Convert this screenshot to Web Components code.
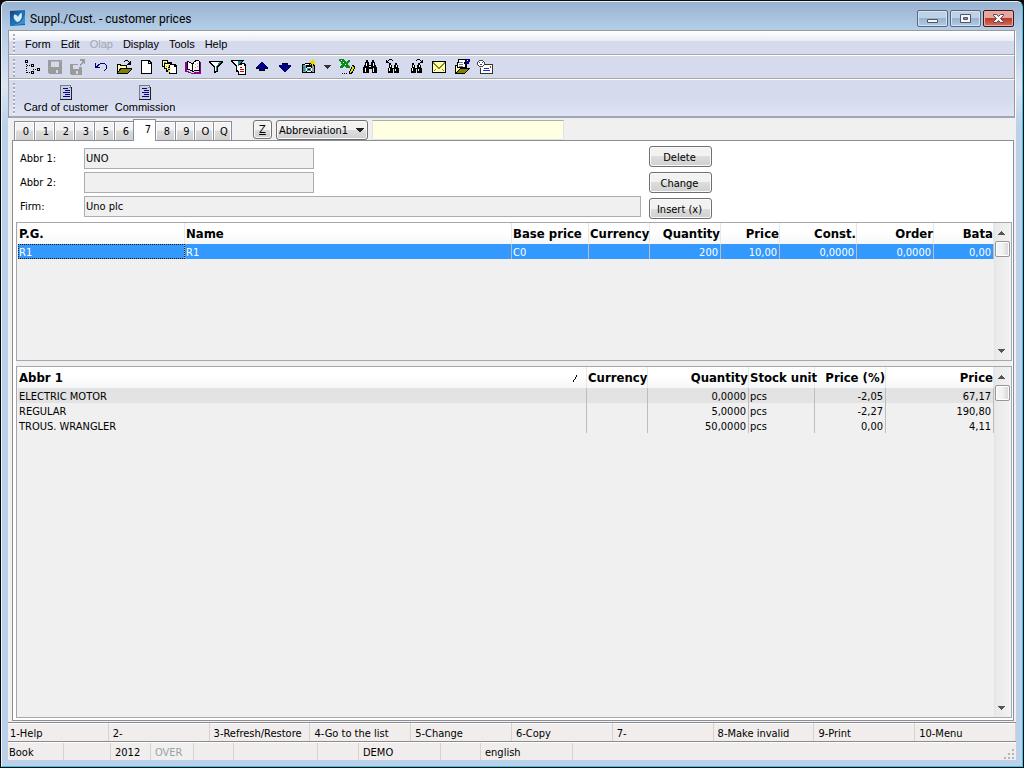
<!DOCTYPE html>
<html lang="en">
<head>
<meta charset="utf-8">
<title>Suppl./Cust. - customer prices</title>
<style>
html,body{margin:0;height:100%;background:#0b0b0d}
body{font:11px/15px "DejaVu Sans Condensed","DejaVu Sans",sans-serif;color:#000}
</style>
</head>
<body>
<app-window heading="Suppl./Cust. - customer prices">
  <tool-area slot="tools"></tool-area>
  <tab-strip slot="tabs"></tab-strip>
  <customer-form slot="form"></customer-form>
  <data-grid slot="upper" source="prices"></data-grid>
  <data-grid slot="lower" source="items"></data-grid>
  <function-bar slot="keys"></function-bar>
  <status-bar slot="status"></status-bar>
</app-window>

<script>
const RESET = `*,:host{box-sizing:border-box}
button,input,select{font:inherit;color:inherit;margin:0;border-radius:0}
button{padding:0;border:0;background:none}
svg{display:block;flex:none}`;

function define(name, css, html) {
  customElements.define(name, class extends HTMLElement {
    connectedCallback() {
      if (this.shadowRoot) return;
      const root = this.attachShadow({ mode: 'open' });
      root.innerHTML = `<style>${RESET}${css}</style>${typeof html === 'function' ? html(this) : html}`;
    }
  });
}

/* ---------- icons, each on a 16 x 16 pixel grid ---------- */
const binocular = `<path fill="#000" d="M4 4h2v2h1v2h2V6h1V4h2v2h1v3h1v5h-5v-4H8v4H3V9h1V6z"/><path fill="#fff" d="M5 6h1v2H5zM4 9h1v3H4zM11 6h1v2h-1zM10 10h1v2h-1zM7 8h2v1H7z"/>`;
const funnel = `<path fill="#000" d="M1 2h14v2h-1v1h-1v1h-1v1h-1v1h-1v5H8v1H6V8H5V7H4V6H3V5H2V4H1z"/><path fill="#fff" d="M3 3h9v1h-1v1h-1v1H9v2H8v4H7V7H6V6H5V5H4V4H3z"/><path fill="#1b8f8f" d="M11 3h2v1h-1v1h-1v1h-1v1H9v5H8V7h1V6h1V4h1z"/>`;
const ICONS = {
  tree: `<g fill="none" stroke="#000"><path d="M1.5 1.5h2v2h-2zM7.5 5.5h2v2h-2zM7.5 12.5h2v2h-2zM13.500 9.500h2v2h-2z"/><path stroke-dasharray="1 1" d="M2.500 5v9M3 6.500h4M3 13.500h4M9 10.500h4"/></g>`,
  save: `<path fill="#9b9b9b" d="M1 1h14v14H2l-1-1z"/><path fill="#d5daed" d="M4 2h8v6H4zM9 11h2v3H9z"/><path fill="#b5b7c2" d="M4 2h8v1H4zM13 2h1v1h-1z"/>`,
  saveas: `<path fill="#9b9b9b" d="M0 5h8v3h4v8H1l-1-1z"/><path fill="#d5daed" d="M3 6h6v4H3zM6 12h2v3H6z"/><path fill="#9b9b9b" d="M10 0h5v5h-1V4h-1v1h-1v1h-1v1h-1V5h1V4h1V2h-2z"/>`,
  undo: `<path fill="#000080" d="M2 4h1v3h1V6h1V5h2V4h5v1h1v1h1v4h-1v1h-1v1h-1v-1h1v-1h1V6h-1V5H7v1H6v1H5v1h2v1H2z"/>`,
  open: `<path fill="#000" d="M1 5h4v1h6v3h5v1l-4 5H1z"/><path fill="#ffffa0" d="M2 6h2v1h6v2H4l-2 4z"/><path fill="#7f7f00" d="M5 10h10l-4 4H2z"/><path fill="#000" d="M8 2h1V1h3v1h1v1h1V2h1v4h-4V5h1V4h1V3h-1V2H9v1H8z"/>`,
  page: `<path fill="#000" d="M2 1h8l3 3v11H2z"/><path fill="#fff" d="M3 2h6v3h3v9H3zM10 3h1v1h-1z"/>`,
  copies: `<path fill="#000" d="M0 1h6v2h4v2h3l2 2v8H7v-2H4v-3H2V8H0z"/><path fill="#ffff9a" d="M1 2h4v2H2v3H1zM3 5h5v1H6v5H5V9H3z"/><path fill="#a09a20" d="M2 3h2v1H2zM4 7h1v1H4z"/><path fill="#fff" d="M8 6h4v2h2v6H8z"/><path fill="#e5d92b" d="M6 6h1v2H6zM6 9h2v1H6zM6 11h2v2H6z"/><path fill="#000" d="M7 6h1v1H7zM7 8h1v1H7z"/>`,
  book: `<path fill="#900090" d="M0 3h2v9h2v1h2v1h3v-1h5V3h2v12H6v-1H3v-1H0z"/><path fill="#000" d="M2 2h2v1h2v1h2V3h1V2h1V1h4v1h1v10H9v1H7v-1H5v-1H2z"/><path fill="#fff" d="M3 3h1v1h2v1h1v6H5v-1H3zM8 5h1V3h2V2h3v9H9v1H8z"/><path fill="#aaa" d="M10 5h1v1h-1zM12 4h1v1h-1zM10 8h1v1h-1zM12 7h1v1h-1z"/>`,
  filter: funnel,
  filterdoc: `<path fill="#000" d="M0 1h13v1h-1v1h-1v1h3v1h1v11H7v-3H5V7H4V6H3V5H2V4H1V3H0z"/><path fill="#fff" d="M2 2h5v2h1v8H7v-1H6V6H5V5H4V4H3V3H2zM8 6h3V5h2v2h1v8H8z"/><path fill="#1b8f8f" d="M7 2h4v1h-1v1H9v1H8v2H7z"/><path fill="#d00000" d="M9 8h2v1H9zM9 10h4v1H9zM9 12h4v1H9z"/>`,
  up: `<path fill="#000080" d="M7 3h2v1h1v1h1v1h1v1h1v1h1v2h-3v2H5v-2H2V8h1V7h1V6h1V5h1V4h1z"/><path fill="#000" d="M2 9h3v1H2zM11 9h3v1h-3zM5 11h6v1H5z"/>`,
  down: `<path fill="#000080" d="M5 4h6v2h3v2h-1v1h-1v1h-1v1h-1v1H9v1H7v-1H6v-1H5v-1H4V9H3V8H2V6h3z"/><path fill="#000" d="M5 4h6v1H5z"/>`,
  camera: `<path fill="#000" d="M2 5h3V4h6v1h4v9H2z"/><path fill="#9c9c9c" d="M3 6h3v7H3zM12 7h2v6h-2z"/><path fill="#fff" d="M5 5h4v1H5zM7 8h4v1h1v3h-1v1H7v-1H6V9h1z"/><path fill="#1a9c9c" d="M3 7h2v5H3zM7 9h4v3H7z"/><path fill="#000" d="M8 10h2v1H8z"/><path fill="#e6d800" d="M12 0h1v2h1V1h1v1h-1v1h2v1h-2v1h1v1h-1V5h-1v2h-1V5h-1v1h-1V5h1V4H9V3h2V2h-1V1h1v1h1z"/>`,
  caret: `<path fill="#222" d="M4 6h8v1h-1v1h-1v1H9v1H7V9H6V8H5V7H4z"/>`,
  toolcaret: `<path fill="#333" d="M5 6h7v1h-1v1h-1v1H9v1H8V9H7V8H6V7H5z"/>`,
  excel: `<path fill="#0a8a1c" d="M0 0h5v1h1v1h1v1h1V2h1V1h2v2h-1v1H9v2h1v1h1v2H7V8H6V7H5v1H4v1H1V7h1V6h1V5H2V3H1V2H0z"/><path fill="#fff" d="M2 1h1v1H2zM4 3h1v1H4zM6 5h1v1H6z"/><path fill="#000" d="M13 6h2v1h1v3h-1v2h-1v2h-1v1h-3v-3h1v-2h1V8h1z"/><path fill="#f0e000" d="M13 7h1v1h1v2h-1v2h-1v1h-1v1h-1v-2h1v-2h1z"/><path fill="#000" d="M3 14h1v1H3zM5 14h1v1H5zM7 14h1v1H7z"/>`,
  find: `<path fill="#000" d="M4 1h2v2h1v3h2V3h1V1h2v2h1v3h1v2h1v6h-5v-4H7v4H1V8h1V6h1V3h1z"/><path fill="#fff" d="M4 4h1v3H4zM3 9h1v4H3zM11 4h1v3h-1zM11 9h1v4h-1zM7 7h2v1H7z"/>`,
  findprev: `${binocular}<path fill="#000" d="M1 1h1v2h2v1H1zM3 1h1V0h3v1h1v1H7V1H4v1H3v1H2V2h1z"/>`,
  findnext: `${binocular}<path fill="#000" d="M15 1h-1v2h-2v1h3zM13 1h-1V0H9v1H8v1h1V1h3v1h1v1h1V2h-1z"/>`,
  mail: `<path fill="#000" d="M1 2h14v12H1z"/><path fill="#ffffb0" d="M2 3h12v10H2z"/><path fill="#8b8520" d="M2 3h1v1h1v1h1v1h1v1h1v1h2V7h1V6h1V5h1V4h1V3h1v2h-1v1h-1v1h-1v1h-1v1H9v1H7V9H6V8H5V7H4V6H3V5H2zM3 11h1v1H3zM4 10h1v1H4zM12 11h1v1h-1zM11 10h1v1h-1z"/>`,
  note: `<path fill="#000" d="M4 0h9v9h3l-5 6H1V6h2V3h1z"/><path fill="#fff" d="M5 1h6v2h-1v2h1v3H4V4h1z"/><path fill="#777" d="M5 3h4v1H5zM5 5h4v1H5zM5 7h4v1H5z"/><path fill="#ffffa0" d="M2 7h1v2h3l-4 4z"/><path fill="#7f7f00" d="M6 10h8l-4 4H2z"/><path fill="#000080" d="M12 0h4v3h-1v2h-3v1h-1V4h1z"/><path fill="#fff" d="M13 1h1v1h-1z"/>`,
  card: `<path fill="#333" d="M5 5h11v10H3V9h2z"/><path fill="#fff" d="M4 6h11v8H4z"/><path fill="#444" d="M2 1h4v1h1v1h1v3H7v1H6v1H2V7H1V6H0V3h1V2h1z"/><path fill="#fff" d="M2 2h4v1h1v3H6v1H2V6H1V3h1z"/><path fill="#444" d="M2 3h1v1H2zM5 3h1v1H5zM3 5h2v1H3z"/><path fill="#2030c0" d="M7 9h5v1H7zM6 11h7v1H6z"/><path fill="#d02020" d="M13 7h1v2h-1z"/>`,
  list: `<path fill="#777b88" d="M2 0h11v2h1v13H2z"/><path fill="#c9cee0" d="M3 1h8v2h2v11H3z"/><path fill="#fff" d="M11 1h1v1h-1z"/><path fill="#00008b" d="M5 3h5v1H5zM7 5h5v1H7zM5 7h7v1H5zM7 9h5v1H7zM5 11h7v1H5z"/><path fill="#222" d="M13 2h1v13H2v-1h11z"/>`,
  arrowup: `<path fill="#555" d="M6 7h1v1h1v1h1v1h1v1H3v-1h1V9h1V8h1z"/>`,
  arrowdown: `<path fill="#555" d="M3 6h7v1H9v1H8v1H7v1H6V9H5V8H4V7H3z"/>`
};

define('pixel-icon', `:host{display:block;width:16px;height:16px;flex:none}`,
  el => `<svg width="16" height="16" viewBox="0 0 16 16" shape-rendering="crispEdges" aria-hidden="true">${ICONS[el.getAttribute('name')]}</svg>`);

/* ---------- window frame ---------- */
define('app-window', `
:host{display:block;height:100vh;padding:1px}
.frame{height:100%;display:flex;flex-direction:column;padding:0 6px 6px;border:1px solid #e9f3fb;border-right-color:#2fc8e8;border-bottom-color:#2fc8e8;border-radius:6px 6px 0 0;
 background:linear-gradient(#98b2d1 0,#b5cce6 28px,#dbe6f3 84px,#b9d1ea 124px)}
header{display:flex;align-items:flex-start;height:28px;flex:none;gap:4px;margin:0 -6px;padding:8px 8px 0;border-radius:6px 6px 0 0;background:linear-gradient(#98b2d1,#b5cee8)}
h1{margin:0;flex:1;font:12px/18px Roboto,"Open Sans",sans-serif}
.controls{display:flex;gap:2px}
.controls button{width:31px;height:17px;display:grid;place-items:center;border:1px solid #56687f;border-radius:2px;box-shadow:inset 0 0 0 1px #d4e2f1;background:linear-gradient(#bdd1e7 50%,#97b3d0 50%,#b5cde5)}
.controls .close{border-color:#481018;box-shadow:inset 0 0 0 1px #e5b0a8;background:linear-gradient(#e4a79e 50%,#ba3a24 50%,#d4725c)}
.content{flex:1;min-height:0;display:flex;flex-direction:column;background:#f0f0f0}
main{flex:1;min-height:0;margin:0 2px 1px 4px;display:flex;flex-direction:column;border:1px solid #8b8e99;border-top:0;background:#fff}
.grids{flex:1;min-height:0;display:flex;flex-direction:column;gap:5px;margin:0 1px 2px 3px;background:#f0f0f0}
::slotted([slot=upper]){height:139px;flex:none}
::slotted([slot=lower]){flex:1;min-height:0}
`, el => `<div class="frame">
<header>
 <svg width="16" height="17" viewBox="0 0 16 17" aria-hidden="true"><defs><linearGradient id="g" x2="1" y2="1"><stop stop-color="#173a72"/><stop offset=".5" stop-color="#1d76b8"/><stop offset="1" stop-color="#0c559b"/></linearGradient></defs><path fill="url(#g)" d="M0 1l15-1v15l-14 1H0z"/><path fill="#58aede" d="M5 14c5 0 8-4 10-10v10l-10 1z" opacity=".6"/><path fill="#d3ecf8" d="M7 12C4 10 3 7 4 5c1-1 3 0 4 2 1-2 2-4 4-4-1 1 1 3-1 6-1 2-2 3-4 3z"/></svg>
 <h1>${el.getAttribute('heading')}</h1>
 <div class="controls">
  <button aria-label="Minimize"><svg width="13" height="11" viewBox="0 0 13 11"><path d="M1.5 6.5h10v3h-10z" fill="#f7f7f7" stroke="#4c5668"/></svg></button>
  <button aria-label="Maximize"><svg width="13" height="11" viewBox="0 0 13 11"><path d="M1.5 1.5h10v8h-10z" fill="#f7f7f7" stroke="#4c5668"/><path d="M4.5 4.5h4v2h-4z" fill="#7d9fc5" stroke="#4c5668"/></svg></button>
  <button class="close" aria-label="Close"><svg width="13" height="11" viewBox="0 0 13 11"><path d="M1.5 1.5h3l2 2 2-2h3v1l-3 3 3 3v1h-3l-2-2-2 2h-3v-1l3-3-3-3z" fill="#f7f7f7" stroke="#4c4658"/></svg></button>
 </div>
</header>
<div class="content">
 <slot name="tools"></slot><slot name="tabs"></slot>
 <main><slot name="form"></slot><div class="grids"><slot name="upper"></slot><slot name="lower"></slot></div></main>
 <slot name="keys"></slot><slot name="status"></slot>
</div></div>`);

/* ---------- menu, toolbar, shortcuts ---------- */
const MENU = ['Form', 'Edit', 'Olap', 'Display', 'Tools', 'Help'];
const TOOLS = ['tree', 'save', 'saveas', 'undo', 'open', 'page', 'copies', 'book', 'filter', 'filterdoc', 'up', 'down', 'camera', 'toolcaret', 'excel', 'find', 'findprev', 'findnext', 'mail', 'note', 'card'];
define('tool-area', `
:host{display:block;flex:none;font:11px/15px "Liberation Sans",Arial,sans-serif;background:#d5daed;border:1px solid #98989c;border-bottom:0;border-right:1px solid #fff}
.row{display:flex;align-items:center;padding-left:11px;border-right:1px solid #98989c;position:relative}
.row::before{content:"";position:absolute;left:4px;top:3px;bottom:2px;width:2px;background:repeating-linear-gradient(#a9adba 0 2px,#fff 2px 3px,transparent 3px 4px)}
nav{height:25px;border-bottom:1px solid #fff;box-shadow:inset 0 -1px #a6a6a6;background:linear-gradient(#fff,#e9ecf6 10px,#d5daed 10px)}
nav button{padding:3px 5px 0}
nav button:disabled{color:#a3a6b0}
.bar{height:24px;border-bottom:1px solid #fff;box-shadow:inset 0 -1px #a6a6a6;align-items:flex-start}
.bar button{width:23px;height:22px;display:grid;place-items:center}
.bar .toolcaret{width:16px}
.short{height:38px;border-bottom:2px solid #a2a6b4;background:linear-gradient(#d5daed 55%,#dfe5f6)}
.short button{display:flex;flex-direction:column;align-items:center;padding-top:3px;width:92px;line-height:13px}
.short button+button{width:66px}
`, `
<nav class="row" aria-label="Menu">${MENU.map(m => `<button${m === 'Olap' ? ' disabled' : ''}>${m}</button>`).join('')}</nav>
<div class="row bar" role="toolbar">${TOOLS.map(t => `<button class="${t}" aria-label="${t}"><pixel-icon name="${t}"></pixel-icon></button>`).join('')}</div>
<div class="row short"><button><pixel-icon name="list"></pixel-icon>Card of customer</button><button><pixel-icon name="list"></pixel-icon>Commission</button></div>`);

/* ---------- tabs with the search box ---------- */
define('tab-strip', `
:host{display:flex;flex:none;align-items:flex-end;height:23px;margin:0 2px 0 4px;padding-left:2px;border-bottom:1px solid #8b8e99;background:#f0f0f0}
[role=tablist]{display:flex;align-items:flex-end}
[role=tab]{width:20px;height:19px;padding-left:3px;border:1px solid #8b8e99;border-bottom:0;border-right-width:0;box-shadow:inset 1px 1px #fff,inset -1px 0 #fff;background:linear-gradient(#f3f3f3 45%,#dcdcdc 50%,#d0d0d0)}
[role=tab]:last-child{border-right-width:1px}
[aria-selected=true]{width:23px;height:22px;margin:0 0 -1px -1px;padding:0 0 3px 7px;border-right-width:1px;background:#fff;box-shadow:none}
[aria-selected=true]+[role=tab]{border-left:0}
[aria-selected=true]~[role=tab]{width:19px}
.search{display:flex;gap:4px;margin-left:21px}
.search button{width:19px;height:19px;border:1px solid #707070;border-radius:3px;box-shadow:inset 0 0 0 1px #fafafa;background:linear-gradient(#f2f2f2 50%,#ddd 50%,#d0d0d0);text-decoration:underline}
.pick{position:relative;display:block}
select{appearance:none;display:block;width:92px;height:20px;padding:0 0 0 2px;border:1px solid #707070;border-radius:3px;box-shadow:inset 0 0 0 1px #fafafa;background:linear-gradient(#f2f2f2 50%,#ddd 50%,#d0d0d0)}
.pick pixel-icon{position:absolute;right:0;top:2px;pointer-events:none}
input{width:192px;height:20px;padding:0 2px;background:#ffffe1;border:1px solid #e2e3ea;border-top-color:#abadb3}
`, `
<div role="tablist">${['0', '1', '2', '3', '5', '6', '7', '8', '9', 'O', 'Q'].map(t => `<button role="tab" aria-selected="${t === '7'}">${t}</button>`).join('')}</div>
<div class="search"><button>Z</button>
<label class="pick"><select aria-label="Search by"><option>Abbreviation1</option></select><pixel-icon name="caret"></pixel-icon></label>
<input type="text" aria-label="Search text"></div>`);

/* ---------- customer form ---------- */
define('customer-form', `
:host{display:flex;flex:none;height:81px;gap:8px;padding:5px 6px 0 7px}
.fields{display:grid;grid-template-columns:64px 557px;grid-auto-rows:21px;row-gap:3px;padding-top:2px;align-items:center}
label{padding-bottom:1px}
input{width:230px;height:21px;padding:0 1px 1px;border:1px solid #abadb3;background:#f0f0f0}
input.wide{width:100%}
.buttons{display:flex;flex-direction:column;gap:5px}
.buttons button{width:63px;height:21px;padding:1px 2px 0 0;border:1px solid #707070;border-radius:3px;box-shadow:inset 0 0 0 1px #fafafa;background:linear-gradient(#f2f2f2 50%,#ddd 50%,#d0d0d0)}
`, `
<div class="fields">
<label for="a1">Abbr 1:</label><input id="a1" readonly value="UNO">
<label for="a2">Abbr 2:</label><input id="a2" readonly>
<label for="fi">Firm:</label><input id="fi" class="wide" readonly value="Uno plc">
</div>
<div class="buttons"><button>Delete</button><button>Change</button><button>Insert (x)</button></div>`);

/* ---------- data grids ---------- */
const SOURCES = {
  prices: {
    columns: [['P.G.', 167], ['Name', 0], ['Base price', 77], ['Currency', 61], ['Quantity', 71, 1], ['Price', 59, 1], ['Const.', 77, 1], ['Order', 77, 1], ['Bata', 60, 1]],
    rows: [['R1', 'R1', 'C0', '', '200', '10,00', '0,0000', '0,0000', '0,00']],
    rowClass: 'selected'
  },
  items: {
    columns: [['Abbr 1', 0, 0, 'sorted'], ['Currency', 61], ['Quantity', 101, 1], ['Stock unit', 66], ['Price (%)', 71, 1], ['Price', 108, 1]],
    rows: [
      ['ELECTRIC MOTOR', '', '0,0000', 'pcs', '-2,05', '67,17'],
      ['REGULAR', '', '5,0000', 'pcs', '-2,27', '190,80'],
      ['TROUS. WRANGLER', '', '50,0000', 'pcs', '0,00', '4,11']
    ],
    rowClass: 'current'
  }
};
define('data-grid', `
:host{display:flex;border:1px solid #a5a7ae;background:#f0f0f0;padding-left:1px}
.body{flex:1;min-width:0}
table{width:100%;table-layout:fixed;border-collapse:separate;border-spacing:0}
th,td{text-align:left;font-weight:400;white-space:nowrap}
th{height:21px;padding:1px 0 0 1px;font:bold 13px/20px "DejaVu Sans Condensed","DejaVu Sans",sans-serif;border-right:1px solid #e6e7ea;background:linear-gradient(#fff 45%,#f5f6f7)}
td{height:15px;padding:2px 2px 0 1px;line-height:13px;border-right:1px solid #bdbdbd}
.num{text-align:right}
.current td{background:#e3e3e3}
.selected td{background:#3399ff;color:#fff}
.selected td:first-child{outline:1px dotted #20140a;outline-offset:-1px}
.head{display:flex;align-items:center;justify-content:space-between;padding-right:8px}
.scroll{width:17px;flex:none;display:flex;flex-direction:column;border-left:1px solid #e4e4e4;background:linear-gradient(90deg,#e9e9e9,#f2f2f2)}
.scroll button{height:18px;flex:none}
.thumb{height:16px;flex:none;margin:0 1px 0 0;border:1px solid #979797;border-radius:2px;box-shadow:inset 0 0 0 1px #fff;background:linear-gradient(90deg,#f3f3f3 45%,#d4d4d8)}
.track{flex:1}
`, el => {
  const s = SOURCES[el.getAttribute('source')];
  const num = i => s.columns[i][2] ? ' class="num"' : '';
  const mark = '<svg width="6" height="7" viewBox="0 0 6 7" aria-hidden="true" shape-rendering="crispEdges"><path d="M4 0h1v2H4zM3 2h1v2H3zM2 4h1v1H2zM1 5h1v2H1z"/></svg>';
  return `<div class="body"><table>
<colgroup>${s.columns.map(c => c[1] ? `<col style="width:${c[1]}px">` : '<col>').join('')}</colgroup>
<thead><tr>${s.columns.map((c, i) => `<th scope="col"${num(i)}>${c[3] ? `<div class="head"><span>${c[0]}</span>${mark}</div>` : c[0]}</th>`).join('')}</tr></thead>
<tbody>${s.rows.map((r, n) => `<tr${n ? '' : ` class="${s.rowClass}"`}>${r.map((v, i) => `<td${num(i)}>${v}</td>`).join('')}</tr>`).join('')}</tbody>
</table></div>
<div class="scroll"><button aria-label="Scroll up"><pixel-icon name="arrowup"></pixel-icon></button><div class="thumb"></div><div class="track"></div><button aria-label="Scroll down"><pixel-icon name="arrowdown"></pixel-icon></button></div>`;
});

/* ---------- bottom bars ---------- */
const KEYS = ['1-Help', '2-', '3-Refresh/Restore', '4-Go to the list', '5-Change', '6-Copy', '7-', '8-Make invalid', '9-Print', '10-Menu'];
define('function-bar', `
:host{display:grid;grid-template-columns:repeat(10,minmax(0,1fr));flex:none;height:20px;border-top:1px solid #8b8b8b;border-bottom:1px solid #8b8b8b;background:#f0edec;box-shadow:inset 0 1px #fff}
button{padding:2px 0 0 4px;text-align:left;white-space:nowrap;border-right:1px solid #d6d3d2}
button:first-of-type{padding-left:2px}
`, KEYS.map(k => `<button>${k}</button>`).join(''));

const CELLS = [['Book', 56], ['', 47], ['2012', 40], ['OVER', 43, 'off'], ['', 40], ['', 84], ['', 41], ['DEMO', 82], ['', 40], ['english', 92]];
define('status-bar', `
:host{display:flex;flex:none;align-items:stretch;height:18px;border-top:1px solid #fff;background:#f0edec}
span{flex:none;padding:2px 0 0 4px;border-right:1px solid #d6d3d2}
span:first-of-type{padding-left:1px}
.off{color:#a0a0a0;background:#f0f0f0}
.grip{margin-left:auto;align-self:flex-end}
`, CELLS.map(c => `<span class="${c[2] || ''}" style="width:${c[1]}px">${c[0]}</span>`).join('') +
`<svg class="grip" width="12" height="12" viewBox="0 0 12 12" aria-hidden="true" fill="#b8b4b2"><path d="M8 1h2v2H8zM8 5h2v2H8zM4 5h2v2H4zM8 9h2v2H8zM4 9h2v2H4zM0 9h2v2H0z"/></svg>`);
</script>
</body>
</html>
